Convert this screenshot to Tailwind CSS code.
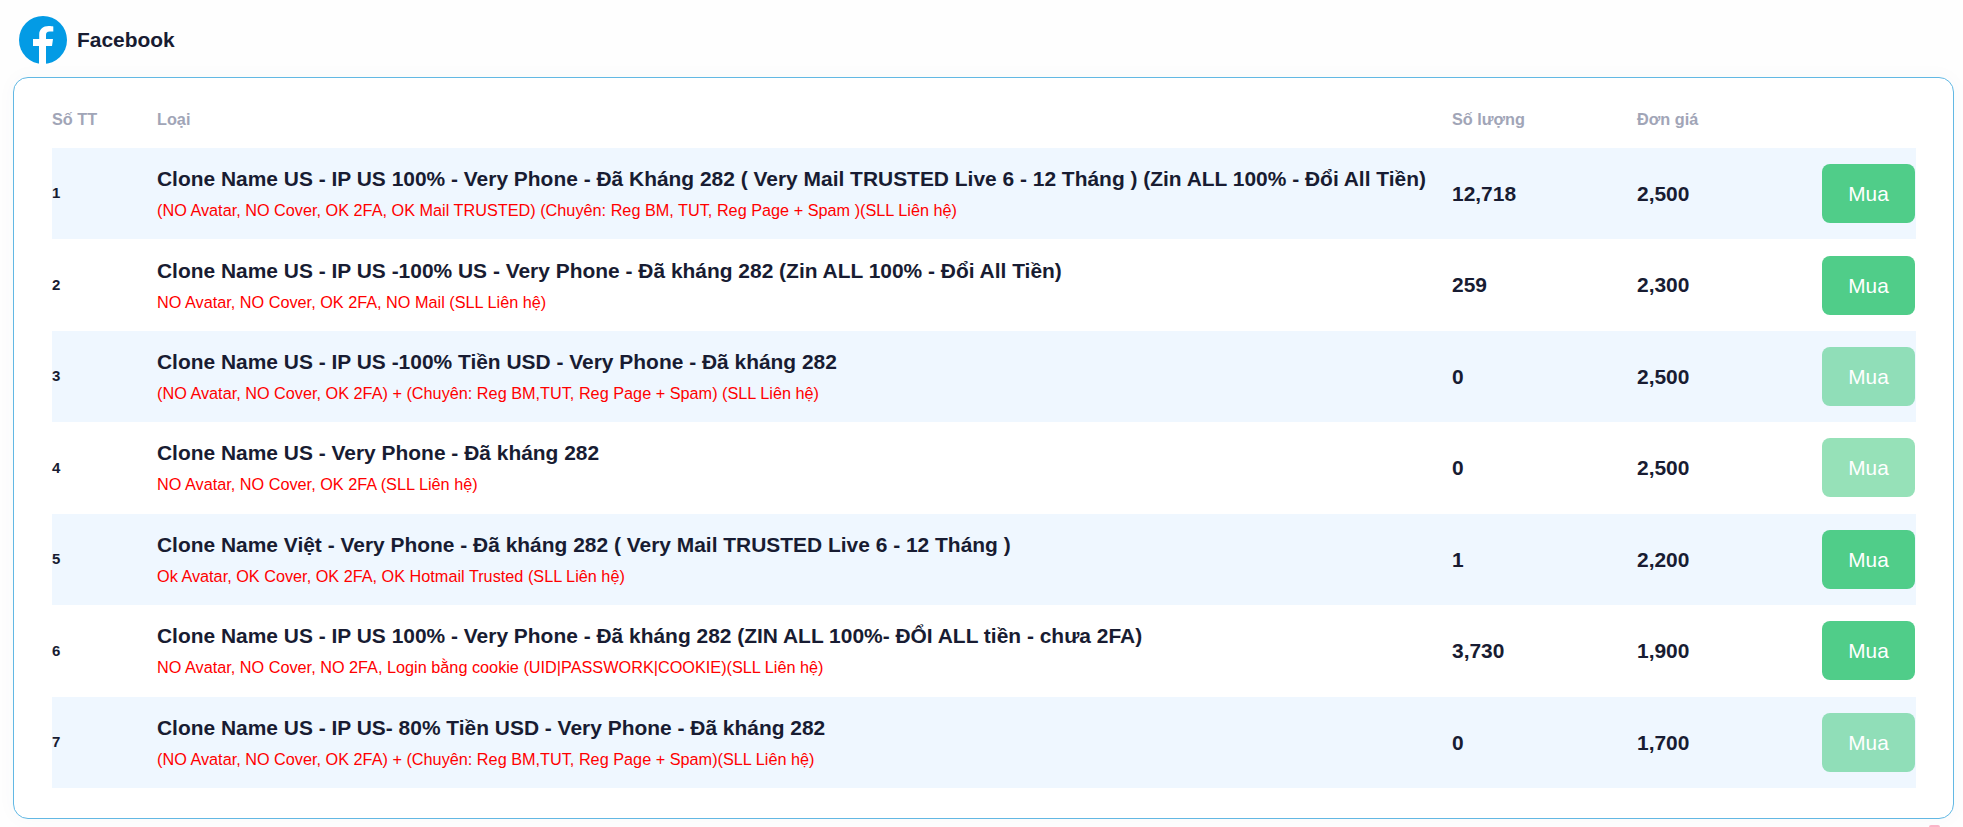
<!DOCTYPE html>
<html lang="en">
<head>
    <meta charset="UTF-8">
    <meta name="viewport" content="width=device-width, initial-scale=1.0">
    <title>Facebook</title>
    <script src="https://cdn.jsdelivr.net/npm/@tailwindcss/browser@4"></script>
</head>
<body class="relative h-[827px] overflow-hidden bg-[#fefefe] font-['Liberation_Sans',Arial,sans-serif] text-[#181c32]">
    <div class="px-[13px] pt-4">
        <div class="flex items-center gap-[10px] pl-[6px] h-12">
            <svg class="w-12 h-12" viewBox="0 0 48 48">
                <circle cx="24" cy="24" r="24" fill="#039be5"/>
                <path fill="#fff" d="M27 48V30h6l1-7H27v-4c0-2 .9-3.400 3.700-3.400h3.600V10.400c-.8-.1-2.600-.4-4.600-.4-5.500 0-9.500 3-9.500 8.600V23h-6.200v7h6v18z"/>
            </svg>
            <span class="text-[20.95px] font-bold">Facebook</span>
        </div>
        <div class="mt-[13px] w-[1941px] h-[742px] bg-white border border-[#62b8e4] rounded-[15px] shadow-[0_0_20px_rgba(76,87,125,0.03)] pl-[38px] pt-[18px]">
            <table class="w-[1864px] table-fixed border-collapse">
                <thead>
                    <tr class="h-[52px] text-left text-[16.25px] font-bold text-[#a1a5b7]">
                        <th class="w-[105px] pb-[5px] font-bold">Số TT</th>
                        <th class="w-[1295px] pb-[5px] font-bold">Loại</th>
                        <th class="w-[185px] pb-[5px] font-bold">Số lượng</th>
                        <th class="w-[160px] pb-[5px] font-bold">Đơn giá</th>
                        <th></th>
                    </tr>
                </thead>
                <tbody>
                    <tr class="h-[91.43px] bg-[#eff7ff]">
                        <td class="text-[15px] font-bold">1</td>
                        <td>
                            <div class="text-[20.95px] font-bold leading-[26px]">Clone Name US - IP US 100% - Very Phone - Đã Kháng 282 ( Very Mail TRUSTED Live 6 - 12 Tháng ) (Zin ALL 100% - Đổi All Tiền)</div>
                            <div class="mt-[7px] text-[16.25px] leading-[22px] text-[#ff0000]">(NO Avatar, NO Cover, OK 2FA, OK Mail TRUSTED) (Chuyên: Reg BM, TUT, Reg Page + Spam )(SLL Liên hệ)</div>
                        </td>
                        <td class="text-[20.95px] font-bold">12,718</td>
                        <td class="text-[20.95px] font-bold">2,500</td>
                        <td class="text-right"><button class="w-[93px] h-[59px] mr-px rounded-lg bg-[#50cd89] text-white text-[20.8px]">Mua</button></td>
                    </tr>
                    <tr class="h-[91.43px]">
                        <td class="text-[15px] font-bold">2</td>
                        <td>
                            <div class="text-[20.95px] font-bold leading-[26px]">Clone Name US - IP US -100% US - Very Phone - Đã kháng 282 (Zin ALL 100% - Đổi All Tiền)</div>
                            <div class="mt-[7px] text-[16.25px] leading-[22px] text-[#ff0000]">NO Avatar, NO Cover, OK 2FA, NO Mail (SLL Liên hệ)</div>
                        </td>
                        <td class="text-[20.95px] font-bold">259</td>
                        <td class="text-[20.95px] font-bold">2,300</td>
                        <td class="text-right"><button class="w-[93px] h-[59px] mr-px rounded-lg bg-[#50cd89] text-white text-[20.8px]">Mua</button></td>
                    </tr>
                    <tr class="h-[91.43px] bg-[#eff7ff]">
                        <td class="text-[15px] font-bold">3</td>
                        <td>
                            <div class="text-[20.95px] font-bold leading-[26px]">Clone Name US - IP US -100% Tiền USD - Very Phone - Đã kháng 282</div>
                            <div class="mt-[7px] text-[16.25px] leading-[22px] text-[#ff0000]">(NO Avatar, NO Cover, OK 2FA) + (Chuyên: Reg BM,TUT, Reg Page + Spam) (SLL Liên hệ)</div>
                        </td>
                        <td class="text-[20.95px] font-bold">0</td>
                        <td class="text-[20.95px] font-bold">2,500</td>
                        <td class="text-right"><button class="w-[93px] h-[59px] mr-px rounded-lg bg-[#50cd89]/60 text-white text-[20.8px]">Mua</button></td>
                    </tr>
                    <tr class="h-[91.43px]">
                        <td class="text-[15px] font-bold">4</td>
                        <td>
                            <div class="text-[20.95px] font-bold leading-[26px]">Clone Name US - Very Phone - Đã kháng 282</div>
                            <div class="mt-[7px] text-[16.25px] leading-[22px] text-[#ff0000]">NO Avatar, NO Cover, OK 2FA (SLL Liên hệ)</div>
                        </td>
                        <td class="text-[20.95px] font-bold">0</td>
                        <td class="text-[20.95px] font-bold">2,500</td>
                        <td class="text-right"><button class="w-[93px] h-[59px] mr-px rounded-lg bg-[#50cd89]/60 text-white text-[20.8px]">Mua</button></td>
                    </tr>
                    <tr class="h-[91.43px] bg-[#eff7ff]">
                        <td class="text-[15px] font-bold">5</td>
                        <td>
                            <div class="text-[20.95px] font-bold leading-[26px]">Clone Name Việt - Very Phone - Đã kháng 282 ( Very Mail TRUSTED Live 6 - 12 Tháng )</div>
                            <div class="mt-[7px] text-[16.25px] leading-[22px] text-[#ff0000]">Ok Avatar, OK Cover, OK 2FA, OK Hotmail Trusted (SLL Liên hệ)</div>
                        </td>
                        <td class="text-[20.95px] font-bold">1</td>
                        <td class="text-[20.95px] font-bold">2,200</td>
                        <td class="text-right"><button class="w-[93px] h-[59px] mr-px rounded-lg bg-[#50cd89] text-white text-[20.8px]">Mua</button></td>
                    </tr>
                    <tr class="h-[91.43px]">
                        <td class="text-[15px] font-bold">6</td>
                        <td>
                            <div class="text-[20.95px] font-bold leading-[26px]">Clone Name US - IP US 100% - Very Phone - Đã kháng 282 (ZIN ALL 100%- ĐỔI ALL tiền - chưa 2FA)</div>
                            <div class="mt-[7px] text-[16.25px] leading-[22px] text-[#ff0000]">NO Avatar, NO Cover, NO 2FA, Login bằng cookie (UID|PASSWORK|COOKIE)(SLL Liên hệ)</div>
                        </td>
                        <td class="text-[20.95px] font-bold">3,730</td>
                        <td class="text-[20.95px] font-bold">1,900</td>
                        <td class="text-right"><button class="w-[93px] h-[59px] mr-px rounded-lg bg-[#50cd89] text-white text-[20.8px]">Mua</button></td>
                    </tr>
                    <tr class="h-[91.43px] bg-[#eff7ff]">
                        <td class="text-[15px] font-bold">7</td>
                        <td>
                            <div class="text-[20.95px] font-bold leading-[26px]">Clone Name US - IP US- 80% Tiền USD - Very Phone - Đã kháng 282</div>
                            <div class="mt-[7px] text-[16.25px] leading-[22px] text-[#ff0000]">(NO Avatar, NO Cover, OK 2FA) + (Chuyên: Reg BM,TUT, Reg Page + Spam)(SLL Liên hệ)</div>
                        </td>
                        <td class="text-[20.95px] font-bold">0</td>
                        <td class="text-[20.95px] font-bold">1,700</td>
                        <td class="text-right"><button class="w-[93px] h-[59px] mr-px rounded-lg bg-[#50cd89]/60 text-white text-[20.8px]">Mua</button></td>
                    </tr>
                </tbody>
            </table>
        </div>
    </div>
    <div class="absolute left-[1929px] top-[825px] w-[11px] h-[2px] rounded-t-sm bg-[#fbb4c8]"></div>
</body>
</html>
